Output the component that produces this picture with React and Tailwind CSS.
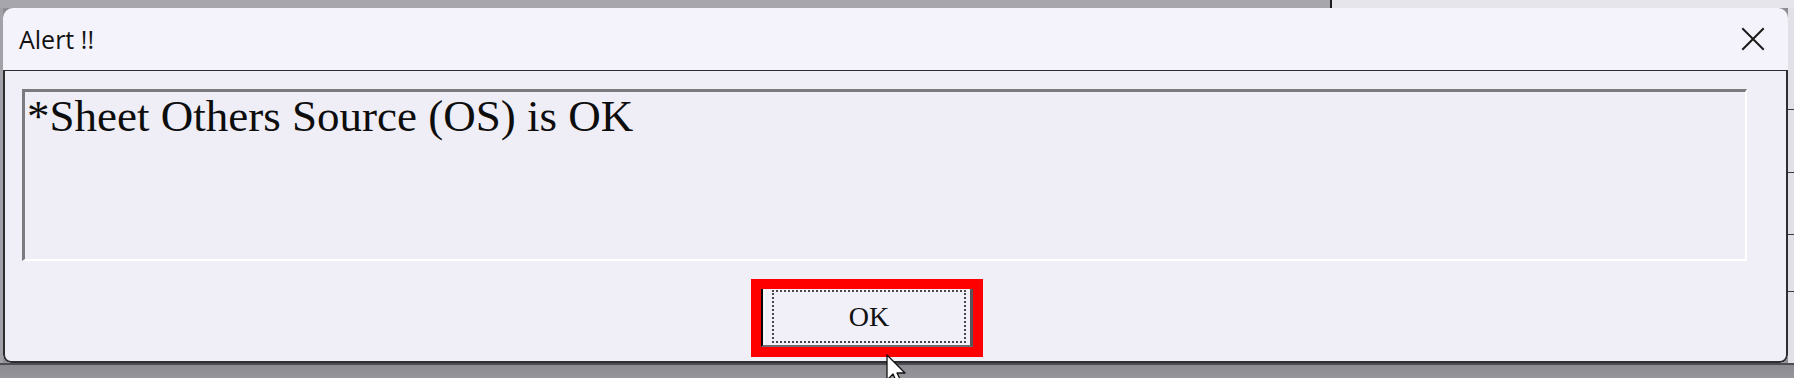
import React from "react";

const CloseIcon = () => (
    <svg width="24" height="24" viewBox="0 0 24 24" fill="none" stroke="#1a1a1a" strokeWidth="2" strokeLinecap="square">
        <path d="M2 2 L22 22 M22 2 L2 22" />
    </svg>
);

const Cursor = () => (
    <svg width="26" height="30" viewBox="0 0 26 30" className="absolute left-[886px] top-[354px]">
        <path d="M1 1 L1 26 L7 20 L11 29 L15 27 L11 19 L19 19 Z" fill="#ffffff" stroke="#111111" strokeWidth="1.3" strokeLinejoin="round" />
    </svg>
);

export default function App() {
    return (
        <div className="relative flex h-[378px] w-[1794px] flex-col overflow-hidden bg-[#8f8d94]">
            {/* strip behind the dialog top */}
            <div className="flex h-[8px] shrink-0">
                <div className="w-[1330px] bg-[#a8a6ad]" />
                <div className="w-[2px] bg-[#1c1c1c]" />
                <div className="flex-1 bg-[#e7e5ec]" />
            </div>

            <div className="flex h-[355px] shrink-0">
                <div className="w-[3px] bg-[#a3a1a8]" />

                {/* dialog */}
                <div className="flex w-[1785px] flex-col overflow-hidden rounded-t-[10px] rounded-b-[8px] bg-[#f4f3fb]">
                    <div className="flex h-[62px] shrink-0 items-center justify-between pl-[16px] pr-[23px]">
                        <span className="text-[25px] leading-none text-[#111] [font-family:'Segoe_UI','Open_Sans','Noto_Sans',sans-serif]">
                            Alert !!
                        </span>
                        <CloseIcon />
                    </div>

                    <div className="flex flex-1 flex-col rounded-b-[8px] border-t border-l-2 border-r-2 border-b-2 border-[#2e2e30] bg-[#f0eef6]">
                        <div className="ml-[17px] mt-[18px] h-[172px] w-[1725px] border-t-[3px] border-l-[3px] border-r-2 border-b-2 border-t-[#7b7a7f] border-l-[#7b7a7f] border-r-white border-b-white bg-[#efedf5] pl-[2px] pt-[2px]">
                            <p className="text-[45px] leading-none text-[#0d0d0d] [font-family:'Liberation_Serif','Times_New_Roman',serif]">
                                *Sheet Others Source (OS) is OK
                            </p>
                        </div>

                        <div className="mt-[18px] pl-[746px]">
                            <div className="h-[78px] w-[232px] border-[10px] border-[#ff0000]">
                                <button className="flex h-full w-full items-stretch border-l-2 border-r-[3px] border-b-2 border-l-[#0a0a0a] border-r-[#555458] border-b-[#6c6b70] bg-[#f1eff7] pl-[1px]">
                                    <span className="flex flex-1 border-l border-white pb-[2px] pl-[7px] pr-[4px] pt-[1px]">
                                        <span className="flex flex-1 items-center justify-center border-2 border-dotted border-[#4a4a4e] text-[28px] leading-none text-[#111] [font-family:'Liberation_Serif','Times_New_Roman',serif]">
                                            OK
                                        </span>
                                    </span>
                                </button>
                            </div>
                        </div>
                    </div>
                </div>

                {/* strip to the right of the dialog */}
                <div className="flex flex-1 flex-col bg-[#e2e0e7]">
                    <div className="h-[102px] border-b border-[#3a3a3c]" />
                    <div className="h-[63px] border-b border-[#3a3a3c]" />
                    <div className="h-[62px] border-b border-[#3a3a3c]" />
                    <div className="h-[57px] border-b border-[#3a3a3c]" />
                    <div className="flex-1" />
                </div>
            </div>

            <div className="h-[2px] shrink-0 bg-[#4d4c52]" />
            <div className="flex-1 bg-gradient-to-b from-[#8d8b92] to-[#97959c]" />

            <Cursor />
        </div>
    );
}
